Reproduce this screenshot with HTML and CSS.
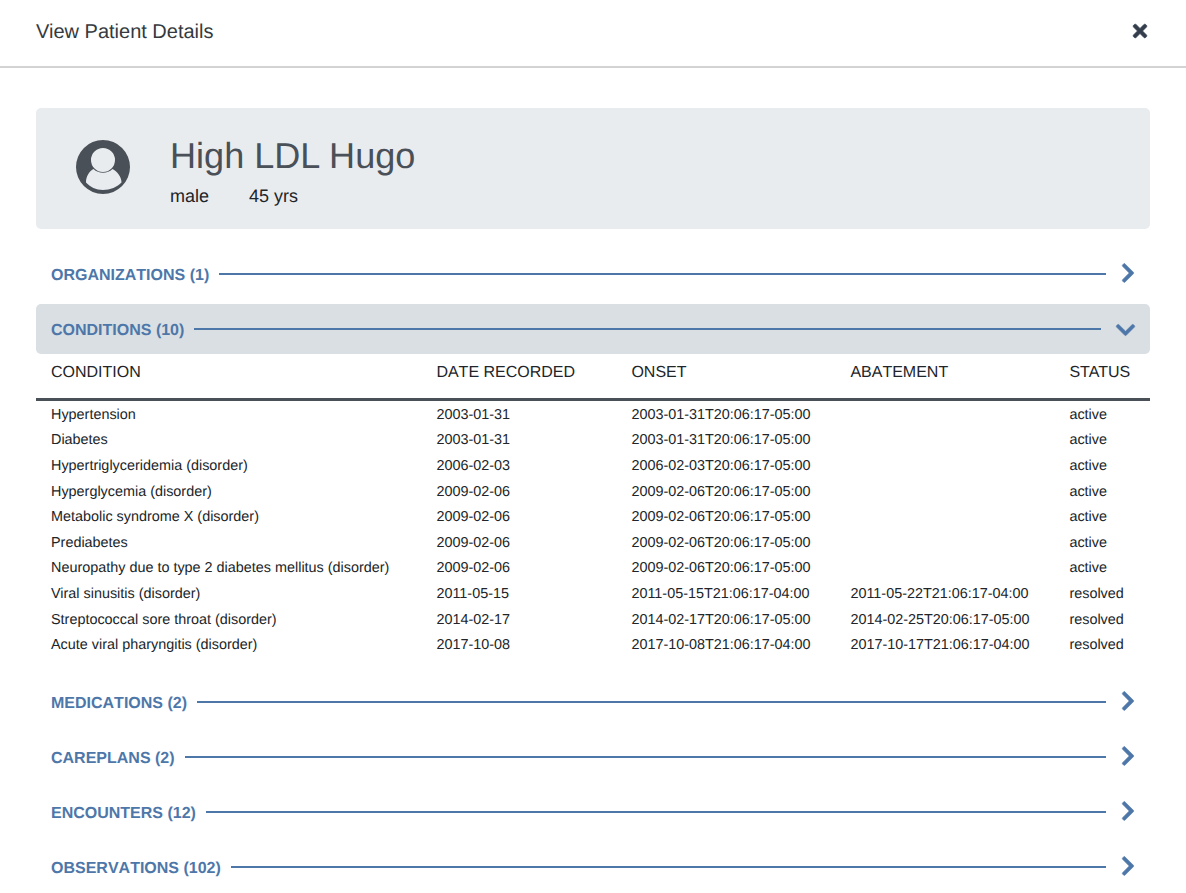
FILE: index.html
```html
<!DOCTYPE html>
<html lang="en">

<head>
    <meta charset="UTF-8">
    <meta name="viewport" content="width=device-width, initial-scale=1.0">
    <title>View Patient Details</title>
    <link rel="stylesheet" href="styles.css">
</head>

<body>

    <header class="modal-header">
        <h1 class="modal-title">View Patient Details</h1>
        <svg class="close-icon" viewBox="0 0 352 512" aria-label="Close">
            <path d="M242.72 256l100.07-100.07c12.28-12.28 12.28-32.19 0-44.48l-22.24-22.24c-12.28-12.28-32.19-12.28-44.48 0L176 189.28 75.93 89.21c-12.28-12.28-32.19-12.28-44.48 0L9.21 111.45c-12.28 12.28-12.28 32.19 0 44.48L109.28 256 9.21 356.07c-12.28 12.28-12.28 32.19 0 44.48l22.24 22.24c12.28 12.28 32.2 12.28 44.48 0L176 322.72l100.07 100.07c12.28 12.28 32.2 12.28 44.48 0l22.24-22.24c12.28-12.28 12.28-32.19 0-44.48L242.72 256z"/>
        </svg>
    </header>

    <main class="modal-body">
        <section class="patient-card">
            <svg class="avatar" viewBox="0 0 54 54">
                <path fill-rule="evenodd" d="M27 0a27 27 0 1 0 0 54a27 27 0 1 0 0-54zM27 8a12 12 0 1 1 0 24a12 12 0 1 1 0-24zM27 50c-7 0-13-3-17-7.500c0-6 3-11 7.500-13.500a14 14 0 0 0 19 0c4.500 2.500 9 7.500 9 13.500c-4 4.500-11.500 7.500-18.500 7.500z"/>
            </svg>
            <div class="patient-info">
                <h2 class="patient-name">High LDL Hugo</h2>
                <div class="patient-meta">
                    <span>male</span>
                    <span>45 yrs</span>
                </div>
            </div>
        </section>

        <div class="section-row">
            <span class="section-label">Organizations (1)</span>
            <span class="section-line"></span>
            <svg class="chevron" viewBox="0 0 320 512"><path d="M285.476 272.971L91.132 467.314c-9.373 9.373-24.569 9.373-33.941 0l-22.667-22.667c-9.357-9.357-9.375-24.522-.04-33.901L188.505 256 34.484 101.255c-9.335-9.379-9.317-24.544.04-33.901l22.667-22.667c9.373-9.373 24.569-9.373 33.941 0L285.475 239.03c9.373 9.372 9.373 24.568.001 33.941z"/></svg>
        </div>

        <div class="section-row open">
            <span class="section-label">Conditions (10)</span>
            <span class="section-line"></span>
            <svg class="chevron" viewBox="0 0 448 512"><path d="M207.029 381.476L12.686 187.132c-9.373-9.373-9.373-24.569 0-33.941l22.667-22.667c9.357-9.357 24.522-9.375 33.901-.04L224 284.505l154.745-154.021c9.379-9.335 24.544-9.317 33.901.04l22.667 22.667c9.373 9.373 9.373 24.569 0 33.941L240.971 381.476c-9.373 9.372-24.569 9.372-33.942 0z"/></svg>
        </div>

        <div class="conditions">
            <div class="conditions-row conditions-head">
                <span>Condition</span>
                <span>Date Recorded</span>
                <span>Onset</span>
                <span>Abatement</span>
                <span class="status-head">Status</span>
            </div>
            <div class="conditions-row">
                <span>Hypertension</span><span>2003-01-31</span><span>2003-01-31T20:06:17-05:00</span><span></span><span>active</span>
            </div>
            <div class="conditions-row">
                <span>Diabetes</span><span>2003-01-31</span><span>2003-01-31T20:06:17-05:00</span><span></span><span>active</span>
            </div>
            <div class="conditions-row">
                <span>Hypertriglyceridemia (disorder)</span><span>2006-02-03</span><span>2006-02-03T20:06:17-05:00</span><span></span><span>active</span>
            </div>
            <div class="conditions-row">
                <span>Hyperglycemia (disorder)</span><span>2009-02-06</span><span>2009-02-06T20:06:17-05:00</span><span></span><span>active</span>
            </div>
            <div class="conditions-row">
                <span>Metabolic syndrome X (disorder)</span><span>2009-02-06</span><span>2009-02-06T20:06:17-05:00</span><span></span><span>active</span>
            </div>
            <div class="conditions-row">
                <span>Prediabetes</span><span>2009-02-06</span><span>2009-02-06T20:06:17-05:00</span><span></span><span>active</span>
            </div>
            <div class="conditions-row">
                <span>Neuropathy due to type 2 diabetes mellitus (disorder)</span><span>2009-02-06</span><span>2009-02-06T20:06:17-05:00</span><span></span><span>active</span>
            </div>
            <div class="conditions-row">
                <span>Viral sinusitis (disorder)</span><span>2011-05-15</span><span>2011-05-15T21:06:17-04:00</span><span>2011-05-22T21:06:17-04:00</span><span>resolved</span>
            </div>
            <div class="conditions-row">
                <span>Streptococcal sore throat (disorder)</span><span>2014-02-17</span><span>2014-02-17T20:06:17-05:00</span><span>2014-02-25T20:06:17-05:00</span><span>resolved</span>
            </div>
            <div class="conditions-row">
                <span>Acute viral pharyngitis (disorder)</span><span>2017-10-08</span><span>2017-10-08T21:06:17-04:00</span><span>2017-10-17T21:06:17-04:00</span><span>resolved</span>
            </div>
        </div>

        <div class="section-row">
            <span class="section-label">Medications (2)</span>
            <span class="section-line"></span>
            <svg class="chevron" viewBox="0 0 320 512"><path d="M285.476 272.971L91.132 467.314c-9.373 9.373-24.569 9.373-33.941 0l-22.667-22.667c-9.357-9.357-9.375-24.522-.04-33.901L188.505 256 34.484 101.255c-9.335-9.379-9.317-24.544.04-33.901l22.667-22.667c9.373-9.373 24.569-9.373 33.941 0L285.475 239.03c9.373 9.372 9.373 24.568.001 33.941z"/></svg>
        </div>
        <div class="section-row">
            <span class="section-label">Careplans (2)</span>
            <span class="section-line"></span>
            <svg class="chevron" viewBox="0 0 320 512"><path d="M285.476 272.971L91.132 467.314c-9.373 9.373-24.569 9.373-33.941 0l-22.667-22.667c-9.357-9.357-9.375-24.522-.04-33.901L188.505 256 34.484 101.255c-9.335-9.379-9.317-24.544.04-33.901l22.667-22.667c9.373-9.373 24.569-9.373 33.941 0L285.475 239.03c9.373 9.372 9.373 24.568.001 33.941z"/></svg>
        </div>
        <div class="section-row">
            <span class="section-label">Encounters (12)</span>
            <span class="section-line"></span>
            <svg class="chevron" viewBox="0 0 320 512"><path d="M285.476 272.971L91.132 467.314c-9.373 9.373-24.569 9.373-33.941 0l-22.667-22.667c-9.357-9.357-9.375-24.522-.04-33.901L188.505 256 34.484 101.255c-9.335-9.379-9.317-24.544.04-33.901l22.667-22.667c9.373-9.373 24.569-9.373 33.941 0L285.475 239.03c9.373 9.372 9.373 24.568.001 33.941z"/></svg>
        </div>
        <div class="section-row">
            <span class="section-label">Observations (102)</span>
            <span class="section-line"></span>
            <svg class="chevron" viewBox="0 0 320 512"><path d="M285.476 272.971L91.132 467.314c-9.373 9.373-24.569 9.373-33.941 0l-22.667-22.667c-9.357-9.357-9.375-24.522-.04-33.901L188.505 256 34.484 101.255c-9.335-9.379-9.317-24.544.04-33.901l22.667-22.667c9.373-9.373 24.569-9.373 33.941 0L285.475 239.03c9.373 9.372 9.373 24.568.001 33.941z"/></svg>
        </div>
    </main>

</body>

</html>
```
FILE: styles.css
```css
html,
body {
    height: 100%;
    overflow: hidden;
}

body {
    margin: 0;
    font-family: "Liberation Sans", Arial, sans-serif;
    text-rendering: geometricPrecision;
    background-color: #fff;
    color: #212529;
}

.modal-header {
    display: flex;
    align-items: center;
    justify-content: space-between;
    height: 68px;
    padding: 0 39px 2px 36px;
    box-sizing: border-box;
    border-bottom: 2px solid #d3d3d3;
}

.modal-title {
    margin: 0;
    font-size: 20px;
    font-weight: normal;
    color: #343a40;
}

.close-icon {
    width: 14px;
    height: 20px;
    margin-top: -2px;
    fill: #343d4c;
    stroke: #343d4c;
    stroke-width: 16;
    overflow: visible;
}

.modal-body {
    padding: 40px 36px 0;
}

.patient-card {
    display: flex;
    align-items: center;
    height: 121px;
    padding-left: 40px;
    box-sizing: border-box;
    background-color: #e9ecef;
    border-radius: 5px;
    margin-bottom: 20px;
}

.avatar {
    width: 54px;
    height: 54px;
    fill: #495057;
    margin: -3px 40px 0 0;
}

.patient-info {
    padding-top: 4px;
}

.patient-name {
    margin: 0 0 7px;
    font-size: 36.1px;
    line-height: 43px;
    font-weight: normal;
    color: #495057;
}

.patient-meta {
    display: flex;
    gap: 40px;
    font-size: 18px;
    line-height: 24px;
}

.section-row {
    display: flex;
    align-items: center;
    height: 50px;
    margin-bottom: 5px;
    padding: 0 15px;
    border-radius: 5px;
}

.section-row.open {
    background-color: #dadfe3;
    margin-bottom: 0;
}

.section-label {
    padding-top: 4px;
    font-size: 16px;
    font-weight: bold;
    font-kerning: none;
    text-transform: uppercase;
    color: #4e77a9;
    margin-right: 10px;
    white-space: nowrap;
}

.section-line {
    flex: 1;
    height: 2px;
    background-color: #4e77a9;
}

.chevron {
    width: 14px;
    height: 22px;
    margin: -2px 0 0 15px;
    fill: #4e77a9;
    stroke: #4e77a9;
    stroke-width: 14;
    overflow: visible;
}

.section-row.open .chevron {
    width: 19px;
    height: 22px;
    margin: 2px 0 0 15px;
}

.conditions {
    margin-bottom: 18.100px;
}

.conditions-row {
    display: grid;
    grid-template-columns: 385.400px 195px 219px 219px 1fr;
    padding-left: 15px;
    font-size: 14.4px;
    line-height: 25.6px;
}

.conditions-head {
    font-size: 16px;
    font-kerning: none;
    line-height: 37px;
    height: 44px;
    margin-bottom: 1.900px;
    border-bottom: 3px solid #495057;
    text-transform: uppercase;
}

.status-head {
    font-kerning: normal;
}
```
